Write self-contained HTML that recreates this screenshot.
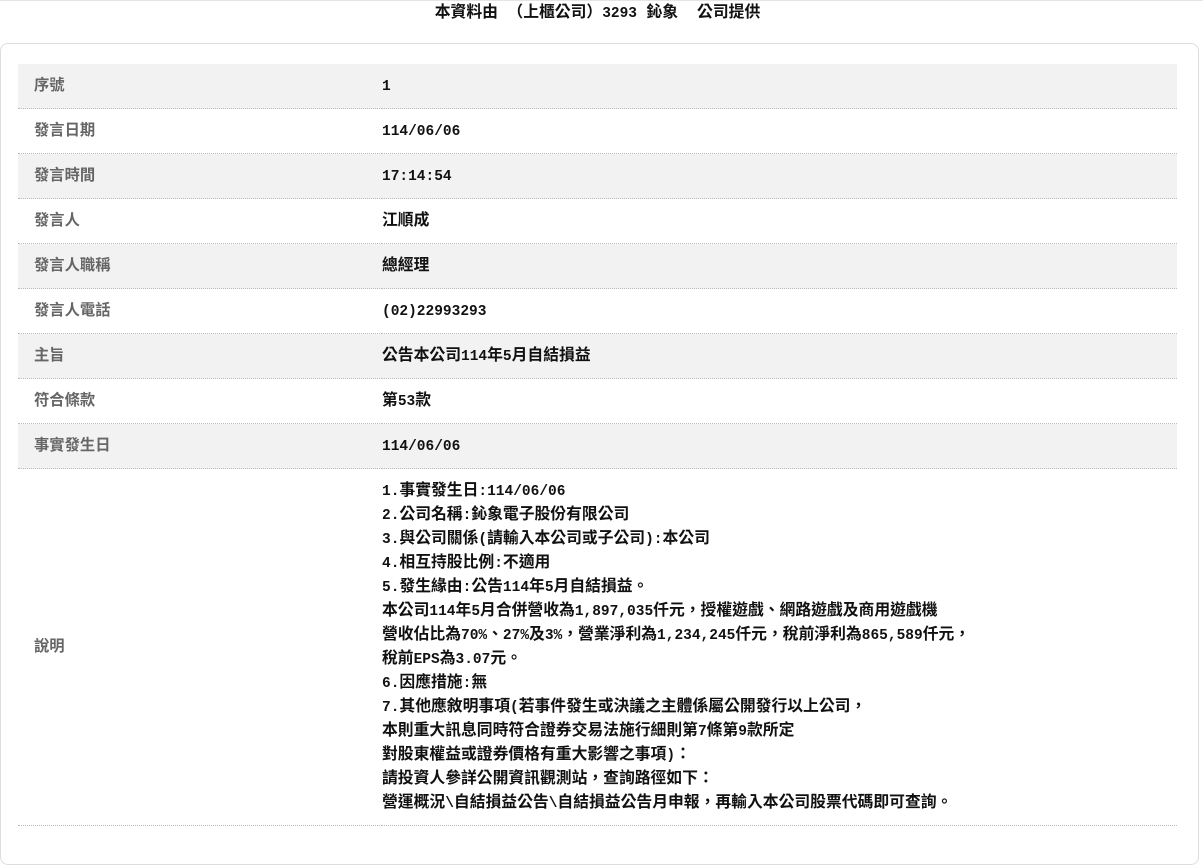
<!DOCTYPE html>
<html><head><meta charset="utf-8"><style>
html,body{margin:0;padding:0;background:#fff;width:1203px;height:829px;overflow:hidden}
body{font-family:"Liberation Mono","Noto Sans CJK TC",monospace;font-size:15.8px}
.m{font-size:14.5px;line-height:10px}
.topline{position:absolute;left:0;top:0;width:1203px;height:1px;background:#e4e4e4}
.title{position:absolute;left:0;top:3px;width:1195px;text-align:center;font-weight:bold;color:#111;line-height:20px}
.card{position:absolute;left:0;top:43px;width:1197px;height:820px;border:1px solid #ddd;border-radius:8px;background:#fff}
table{position:absolute;left:18px;top:64px;width:1159px;border-collapse:collapse;table-layout:fixed}
td{height:44px;border-bottom:1px dotted #bbb;font-weight:bold;padding:0;vertical-align:middle;line-height:20px}
tr.g td{background:#f2f2f2}
td.l{width:364px;padding-left:16px;color:#666;font-family:"Liberation Sans","Noto Sans CJK TC",sans-serif;font-size:15.3px;box-sizing:border-box}
td.v{color:#111}
td.d{line-height:24px;padding:10px 0 10px 0}
</style></head><body>
<div class="topline"></div>
<div class="title">本資料由 （上櫃公司）<span class="m">3293</span> 鈊象 &nbsp;公司提供</div>
<div class="card"></div>
<table>
<tr class="g"><td class="l">序號</td><td class="v"><span class="m">1</span></td></tr>
<tr><td class="l">發言日期</td><td class="v"><span class="m">114/06/06</span></td></tr>
<tr class="g"><td class="l">發言時間</td><td class="v"><span class="m">17:14:54</span></td></tr>
<tr><td class="l">發言人</td><td class="v">江順成</td></tr>
<tr class="g"><td class="l">發言人職稱</td><td class="v">總經理</td></tr>
<tr><td class="l">發言人電話</td><td class="v"><span class="m">(02)22993293</span></td></tr>
<tr class="g"><td class="l">主旨</td><td class="v">公告本公司<span class="m">114</span>年<span class="m">5</span>月自結損益</td></tr>
<tr><td class="l">符合條款</td><td class="v">第<span class="m">53</span>款</td></tr>
<tr class="g"><td class="l">事實發生日</td><td class="v"><span class="m">114/06/06</span></td></tr>
<tr><td class="l">說明</td><td class="v d"><span class="m">1.</span>事實發生日<span class="m">:114/06/06</span><br><span class="m">2.</span>公司名稱<span class="m">:</span>鈊象電子股份有限公司<br><span class="m">3.</span>與公司關係<span class="m">(</span>請輸入本公司或子公司<span class="m">):</span>本公司<br><span class="m">4.</span>相互持股比例<span class="m">:</span>不適用<br><span class="m">5.</span>發生緣由<span class="m">:</span>公告<span class="m">114</span>年<span class="m">5</span>月自結損益。<br>本公司<span class="m">114</span>年<span class="m">5</span>月合併營收為<span class="m">1,897,035</span>仟元，授權遊戲、網路遊戲及商用遊戲機<br>營收佔比為<span class="m">70%</span>、<span class="m">27%</span>及<span class="m">3%</span>，營業淨利為<span class="m">1,234,245</span>仟元，稅前淨利為<span class="m">865,589</span>仟元，<br>稅前<span class="m">EPS</span>為<span class="m">3.07</span>元。<br><span class="m">6.</span>因應措施<span class="m">:</span>無<br><span class="m">7.</span>其他應敘明事項<span class="m">(</span>若事件發生或決議之主體係屬公開發行以上公司，<br>本則重大訊息同時符合證券交易法施行細則第<span class="m">7</span>條第<span class="m">9</span>款所定<br>對股東權益或證券價格有重大影響之事項<span class="m">)</span>：<br>請投資人參詳公開資訊觀測站，查詢路徑如下：<br>營運概況<span class="m">\</span>自結損益公告<span class="m">\</span>自結損益公告月申報，再輸入本公司股票代碼即可查詢。</td></tr>
</table>
</body></html>
